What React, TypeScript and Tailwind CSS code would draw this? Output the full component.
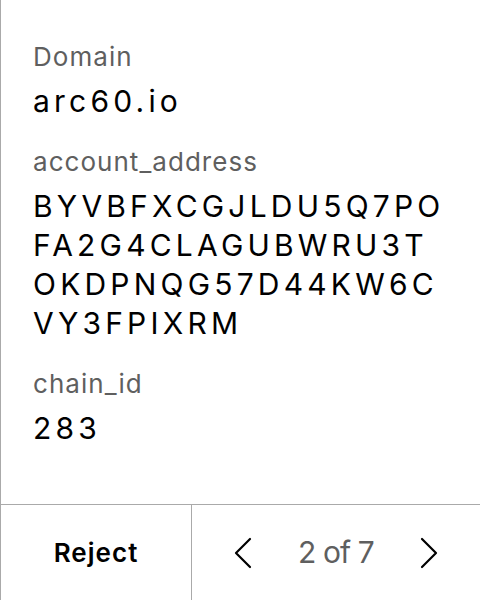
import { useState } from 'react';

const fields = [
  { label: 'Domain', value: 'arc60.io' },
  { label: 'account_address', value: 'BYVBFXCGJLDU5Q7POFA2G4CLAGUBWRU3TOKDPNQG57D44KW6CVY3FPIXRM' },
  { label: 'chain_id', value: '283' },
];

function Chevron({ dir }: { dir: 'left' | 'right' }) {
  return (
    <svg width="18" height="32" viewBox="0 0 18 32" fill="none" stroke="#000" strokeWidth="2.2" strokeLinecap="round" strokeLinejoin="round">
      {dir === 'left' ? <polyline points="16,2 2,16 16,30" /> : <polyline points="2,2 16,16 2,30" />}
    </svg>
  );
}

export default function App() {
  const [page, setPage] = useState(2);
  const total = 7;

  return (
    <div className="h-[600px] w-[480px] flex flex-col bg-white border-l border-[#aaaaaa] text-black" style={{ fontFamily: 'Inter, "Noto Sans", sans-serif' }}>
      {/* Fields */}
      <div className="flex-1 pt-[40px] pl-8 pr-[29px] flex flex-col gap-6">
        {fields.map(f => (
          <div key={f.label} className="flex flex-col gap-2">
            <div className="text-[26px] leading-[34px] tracking-[0.04em] text-[#5f5f5f]">{f.label}</div>
            <div className="text-[30px] leading-[39px] tracking-[0.14em] break-all">{f.value}</div>
          </div>
        ))}
      </div>

      {/* Footer */}
      <div className="h-24 border-t border-[#aaaaaa] flex">
        <button className="w-[191px] border-r border-[#aaaaaa] flex items-center justify-center text-[26px] tracking-[0.04em] font-semibold">
          Reject
        </button>
        <div className="flex-1 flex items-center justify-center gap-[46px]">
          <button onClick={() => setPage(p => Math.max(1, p - 1))} className="flex items-center">
            <Chevron dir="left" />
          </button>
          <span className="text-[30px] tracking-[-0.03em] text-[#5f5f5f]">{page} of {total}</span>
          <button onClick={() => setPage(p => Math.min(total, p + 1))} className="flex items-center">
            <Chevron dir="right" />
          </button>
        </div>
      </div>
    </div>
  );
}
